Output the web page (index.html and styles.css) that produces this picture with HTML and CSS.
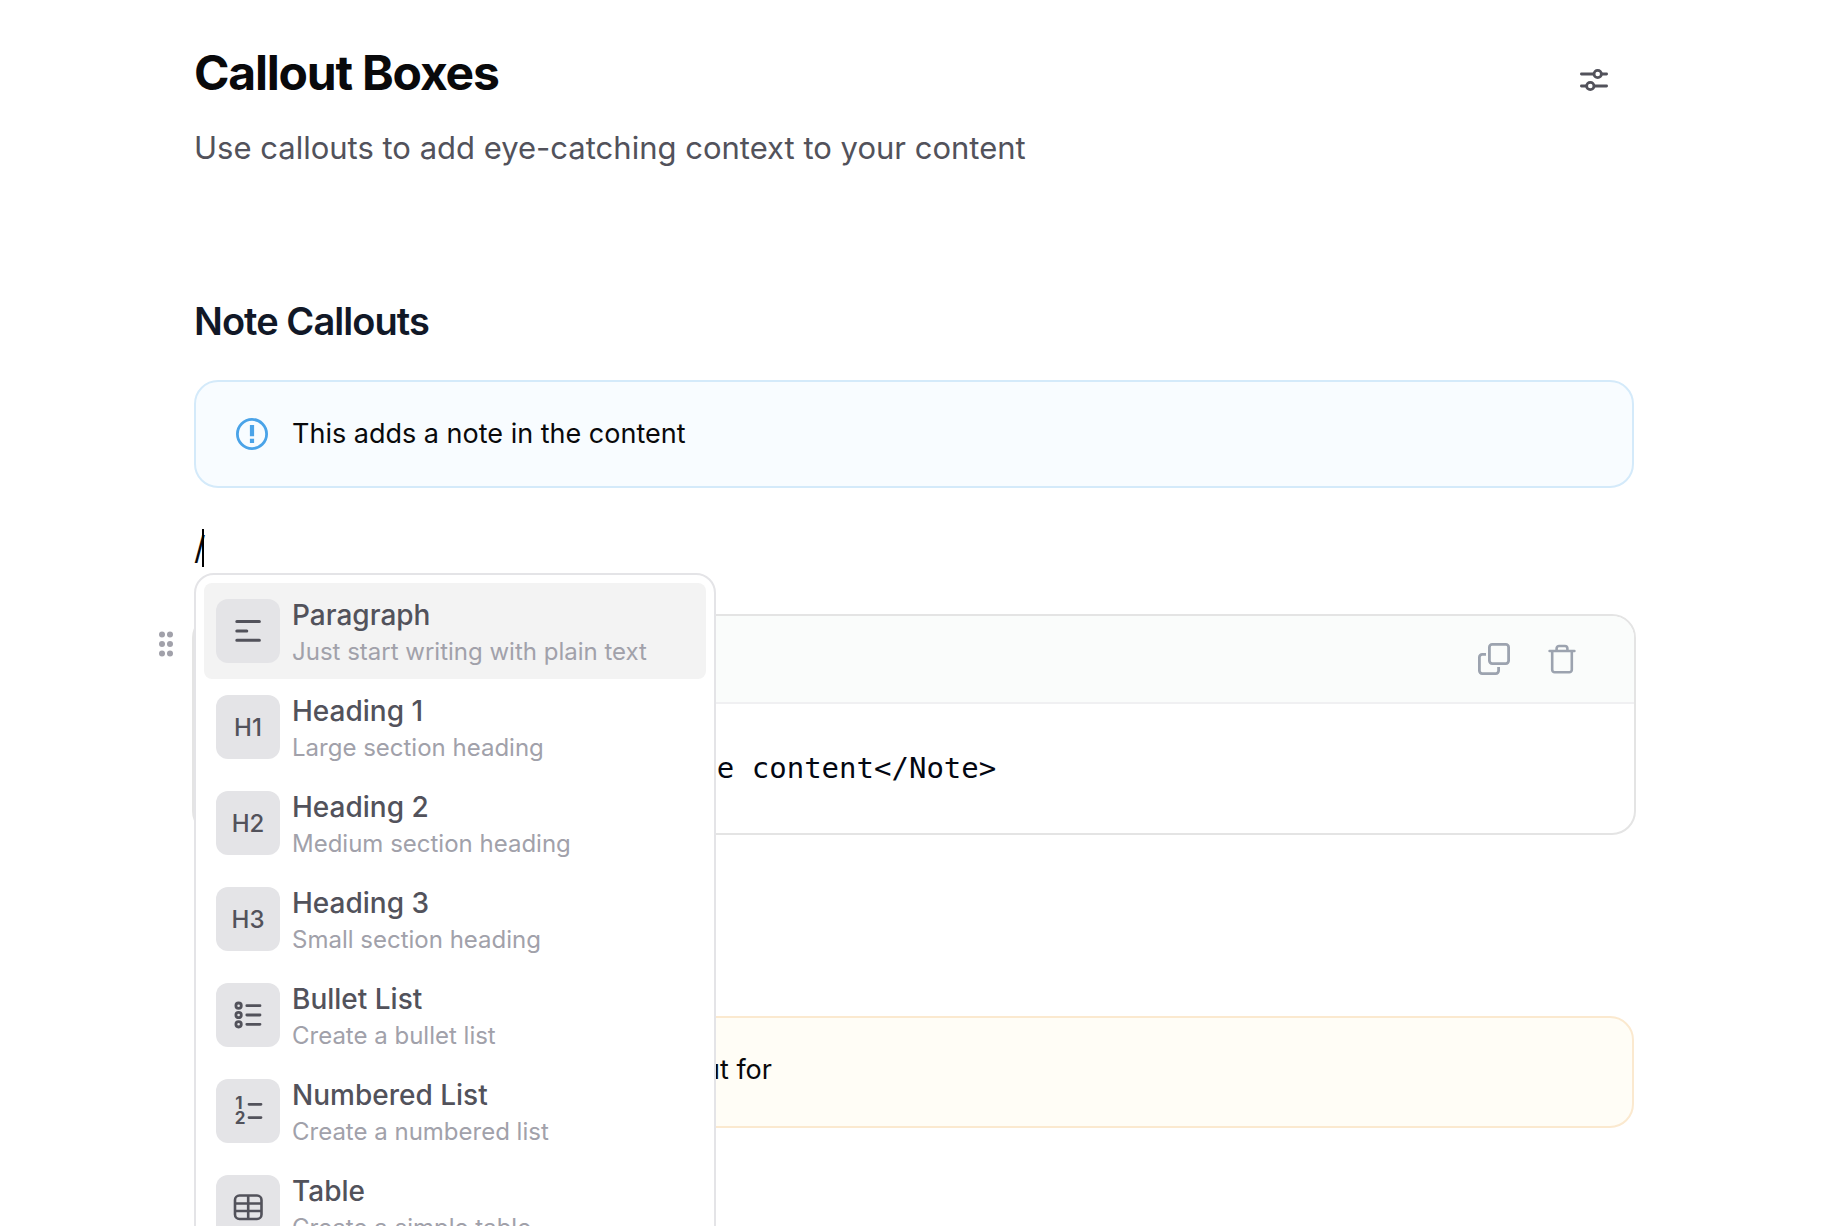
FILE: index.html
```html
<!DOCTYPE html>
<html lang="en">
<head>
<meta charset="utf-8">
<title>Callout Boxes</title>
<meta name="viewport" content="width=device-width, initial-scale=1">
<link rel="stylesheet" href="styles.css">
</head>
<body>
<main class="page">
  <header class="page-header">
    <div class="page-heading">
      <h1 class="page-title">Callout Boxes</h1>
      <p class="page-subtitle">Use callouts to add eye-catching context to your content</p>
    </div>
    <button class="icon-button settings-button" type="button" aria-label="Page settings">
      <svg width="28" height="24" viewBox="0 0 28 24" fill="none" stroke="currentColor" stroke-width="2.8" stroke-linecap="round"><path d="M1.400 6H13.500M22 6h4.600M1.400 18H6M14.500 18h12.100"/><circle cx="17.700" cy="6" r="3.700"/><circle cx="10.300" cy="18" r="3.700"/></svg>
    </button>
  </header>

  <h2 class="section-title">Note Callouts</h2>
  <aside class="callout callout-note">
    <svg class="callout-icon" width="32" height="32" viewBox="0 0 32 32" fill="none" stroke="currentColor"><circle cx="16" cy="16" r="14.600" stroke-width="2.800"/><path d="M16 7v11.300M16 20.700v4.300" stroke-width="4.200"/></svg>
    <p class="callout-text">This adds a note in the content</p>
  </aside>

  <div class="command-line">
    <span class="command-text">/</span><span class="caret"></span>
    <div class="command-menu" role="listbox" aria-label="Insert block">
      <button class="command-item is-active" type="button" role="option" aria-selected="true">
        <span class="command-icon"><svg width="32" height="32" viewBox="0 0 32 32" fill="none" stroke="currentColor" stroke-width="3" stroke-linecap="round"><path d="M4.800 6.500h22.600M4.800 16h10M4.800 25.300h22.600"/></svg></span>
        <span class="command-copy"><span class="command-name">Paragraph</span><span class="command-desc">Just start writing with plain text</span></span>
      </button>
      <button class="command-item" type="button" role="option" aria-selected="false">
        <span class="command-icon">H1</span>
        <span class="command-copy"><span class="command-name">Heading 1</span><span class="command-desc">Large section heading</span></span>
      </button>
      <button class="command-item" type="button" role="option" aria-selected="false">
        <span class="command-icon">H2</span>
        <span class="command-copy"><span class="command-name">Heading 2</span><span class="command-desc">Medium section heading</span></span>
      </button>
      <button class="command-item" type="button" role="option" aria-selected="false">
        <span class="command-icon">H3</span>
        <span class="command-copy"><span class="command-name">Heading 3</span><span class="command-desc">Small section heading</span></span>
      </button>
      <button class="command-item" type="button" role="option" aria-selected="false">
        <span class="command-icon"><svg width="32" height="32" viewBox="0 0 32 32" fill="none" stroke="currentColor" stroke-width="2.800" stroke-linecap="round"><circle cx="6.600" cy="6.700" r="2.700"/><circle cx="6.600" cy="16" r="2.700"/><circle cx="6.600" cy="25.300" r="2.700"/><path d="M14.800 6.700H28M14.800 16H28M14.800 25.300H28"/></svg></span>
        <span class="command-copy"><span class="command-name">Bullet List</span><span class="command-desc">Create a bullet list</span></span>
      </button>
      <button class="command-item" type="button" role="option" aria-selected="false">
        <span class="command-icon"><svg width="32" height="32" viewBox="0 0 32 32" fill="none" stroke="currentColor" stroke-width="2.800" stroke-linecap="round"><text class="list-digit" x="7" y="14">1</text><text class="list-digit" x="8" y="29">2</text><path d="M17 9.300h12M17 22.600h12"/></svg></span>
        <span class="command-copy"><span class="command-name">Numbered List</span><span class="command-desc">Create a numbered list</span></span>
      </button>
      <button class="command-item" type="button" role="option" aria-selected="false">
        <span class="command-icon"><svg width="32" height="32" viewBox="0 0 32 32" fill="none" stroke="currentColor" stroke-width="2.600"><rect x="3" y="4.500" width="26.500" height="23.500" rx="4.500"/><path d="M16.200 4.500V28M3 12.500h26.500M3 20h26.500"/></svg></span>
        <span class="command-copy"><span class="command-name">Table</span><span class="command-desc">Create a simple table</span></span>
      </button>
    </div>
  </div>

  <section class="code-card">
    <button class="icon-button drag-handle" type="button" aria-label="Move block">
      <svg width="16" height="26" viewBox="0 0 16 26" fill="currentColor"><circle cx="4" cy="3.500" r="3"/><circle cx="12" cy="3.500" r="3"/><circle cx="4" cy="13" r="3"/><circle cx="12" cy="13" r="3"/><circle cx="4" cy="22.500" r="3"/><circle cx="12" cy="22.500" r="3"/></svg>
    </button>
    <div class="code-toolbar">
      <button class="icon-button" type="button" aria-label="Copy code">
        <svg width="32" height="32" viewBox="0 0 32 32" fill="none" stroke="currentColor" stroke-width="2.800"><rect x="11.400" y="1.400" width="19.200" height="19.200" rx="2.800"/><path d="M8 11.400H4.200a2.800 2.800 0 0 0-2.800 2.800v13.600a2.800 2.800 0 0 0 2.800 2.800h13.600a2.800 2.800 0 0 0 2.800-2.800V24"/></svg>
      </button>
      <button class="icon-button" type="button" aria-label="Delete block">
        <svg width="28" height="32" viewBox="0 0 28 32" fill="none" stroke="currentColor" stroke-width="2.600" stroke-linecap="round" stroke-linejoin="round"><path d="M1.600 8h24.800M4.200 8v18.800a2.500 2.500 0 0 0 2.500 2.500h14.600a2.500 2.500 0 0 0 2.500-2.500V8M8.600 8V5.500a2.500 2.500 0 0 1 2.500-2.500h5.800a2.500 2.500 0 0 1 2.500 2.500V8"/></svg>
      </button>
    </div>
    <pre class="code-body"><code>&lt;Note&gt;This adds a note in the content&lt;/Note&gt;</code></pre>
  </section>

  <h2 class="section-title section-title-next">Warning Callouts</h2>
  <aside class="callout callout-warning">
    <svg class="callout-icon" width="32" height="32" viewBox="0 0 32 32" fill="none" stroke="currentColor" stroke-width="2.800" stroke-linejoin="round"><path d="M16 3 30 28H2ZM16 11v8M16 22v3"/></svg>
    <p class="callout-text">This raises a warning to watch out for</p>
  </aside>
</main>
</body>
</html>
```
FILE: styles.css
```css
* {
  box-sizing: border-box;
}

body {
  margin: 0;
  height: 100vh;
  overflow: hidden;
  background: #fff;
  color: #09090b;
  font-family: Inter, "Liberation Sans", sans-serif;
}

h1, h2, p, pre {
  margin: 0;
}

button {
  margin: 0;
  padding: 0;
  border: 0;
  background: none;
  color: inherit;
  font: inherit;
  text-align: left;
  cursor: pointer;
}

svg {
  display: block;
  flex: none;
}

.page {
  padding: 44px 206px 0 194px;
}

.page-header {
  display: flex;
  justify-content: space-between;
  align-items: flex-start;
}

.page-title {
  font-size: 48px;
  line-height: 58px;
  font-weight: 700;
  letter-spacing: -0.025em;
}

.page-subtitle {
  margin-top: 22px;
  font-size: 31px;
  line-height: 48px;
  color: #52525b;
}

.icon-button {
  color: #9ca3af;
}

.settings-button {
  padding: 24px 26px;
  color: #52525b;
}

.section-title {
  margin-top: 125px;
  font-size: 38px;
  line-height: 48px;
  font-weight: 600;
  letter-spacing: -0.025em;
  color: #111827;
}

.section-title-next {
  margin-top: 98px;
}

.callout {
  display: flex;
  align-items: center;
  gap: 24px;
  margin-top: 35px;
  padding: 30px 40px;
  border: 2px solid;
  border-radius: 24px;
}

.callout-text {
  font-size: 27px;
  line-height: 44px;
}

.callout-note {
  border-color: #d4eafa;
  background: #f8fcff;
}

.callout-note .callout-icon {
  color: #4aa3e8;
}

.callout-warning {
  padding-bottom: 34px;
  border-color: #fbe9cf;
  background: #fffdf6;
}

.callout-warning .callout-icon {
  color: #d97706;
}

.command-line {
  position: relative;
  display: flex;
  align-items: center;
  margin-top: 40px;
  height: 40px;
}

.command-text {
  font-size: 32px;
  line-height: 40px;
}

.caret {
  width: 2px;
  height: 38px;
  margin-left: -4px;
  background: #000;
}

.command-menu {
  position: absolute;
  z-index: 2;
  top: 45px;
  left: 0;
  width: 522px;
  padding: 8px;
  border: 2px solid #e4e4e7;
  border-radius: 20px;
  background: #fff;
}

.command-item {
  display: flex;
  align-items: center;
  gap: 12px;
  width: 100%;
  height: 96px;
  padding: 0 12px;
  border-radius: 8px;
}

.command-item.is-active {
  background: #f3f3f3;
}

.command-icon {
  display: flex;
  flex: none;
  align-items: center;
  justify-content: center;
  width: 64px;
  height: 64px;
  border-radius: 12px;
  background: #e4e4e7;
  color: #52525b;
  font-size: 24px;
  font-weight: 500;
}

.list-digit {
  fill: currentColor;
  stroke: none;
  font-size: 17px;
  font-weight: 700;
  text-anchor: middle;
}

.command-copy {
  display: flex;
  flex-direction: column;
}

.command-name {
  font-size: 28px;
  line-height: 42px;
  font-weight: 500;
  color: #52525b;
}

.command-desc {
  font-size: 24px;
  line-height: 32px;
  color: #a1a1aa;
}

.code-card {
  position: relative;
  margin: 46px -2px 0;
  border: 2px solid #e4e4e4;
  border-radius: 24px;
}

.drag-handle {
  position: absolute;
  top: 15px;
  left: -36px;
  color: #a1a1aa;
}

.code-toolbar {
  display: flex;
  justify-content: flex-end;
  align-items: center;
  gap: 38px;
  height: 88px;
  padding: 0 58px;
  border-bottom: 2px solid #f0f0f2;
  border-radius: 22px 22px 0 0;
  background: #fafcfb;
}

.code-body {
  padding: 44px 34px 45px;
  overflow: hidden;
  font-family: "DejaVu Sans Mono", "Liberation Mono", monospace;
  font-size: 29px;
  line-height: 40px;
  color: #030712;
}

.code-body code {
  font: inherit;
}
```
